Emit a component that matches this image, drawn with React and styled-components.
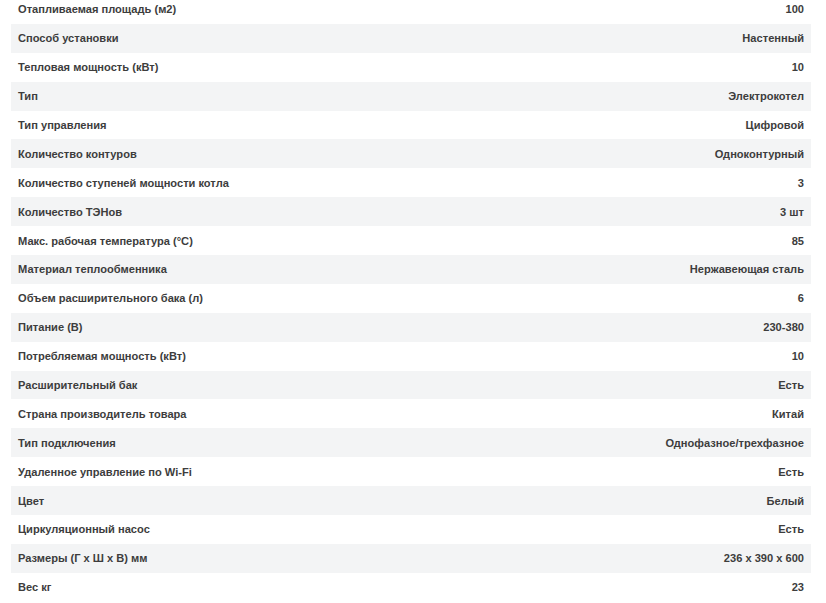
import React from 'react'
import styled, { createGlobalStyle } from 'styled-components'

const GlobalStyle = createGlobalStyle`
    body {
        margin: 0;
        background: #fff;
        font-family: 'Liberation Sans', Arial, sans-serif;
    }
`

const Wrapper = styled.div`
    padding-left: 11px;
    margin-top: -5px;
`

const Table = styled.div`
    display: flex;
    flex-direction: column;
    width: 800px;
`

const Row = styled.div`
    display: flex;
    justify-content: space-between;
    align-items: center;
    height: 28.9px;
    padding: 0 7px;
    box-sizing: border-box;
    font-size: 11.1px;
    font-weight: bold;
    color: #3d3d3d;
    background: ${props => props.$striped ? '#f3f4f5' : 'transparent'};
`

const Label = styled.span``
const Value = styled.span`
    text-align: right;
`

const specs = [
    ['Отапливаемая площадь (м2)', '100'],
    ['Способ установки', 'Настенный'],
    ['Тепловая мощность (кВт)', '10'],
    ['Тип', 'Электрокотел'],
    ['Тип управления', 'Цифровой'],
    ['Количество контуров', 'Одноконтурный'],
    ['Количество ступеней мощности котла', '3'],
    ['Количество ТЭНов', '3 шт'],
    ['Макс. рабочая температура (°C)', '85'],
    ['Материал теплообменника', 'Нержавеющая сталь'],
    ['Объем расширительного бака (л)', '6'],
    ['Питание (В)', '230-380'],
    ['Потребляемая мощность (кВт)', '10'],
    ['Расширительный бак', 'Есть'],
    ['Страна производитель товара', 'Китай'],
    ['Тип подключения', 'Однофазное/трехфазное'],
    ['Удаленное управление по Wi-Fi', 'Есть'],
    ['Цвет', 'Белый'],
    ['Циркуляционный насос', 'Есть'],
    ['Размеры (Г х Ш х В) мм', '236 х 390 х 600'],
    ['Вес кг', '23'],
]

export default function App() {
    return (
        <Wrapper>
            <GlobalStyle />
            <Table>
                {specs.map(([name, value], i) => (
                    <Row key={name} $striped={i % 2 === 1}>
                        <Label>{name}</Label>
                        <Value>{value}</Value>
                    </Row>
                ))}
            </Table>
        </Wrapper>
    )
}
